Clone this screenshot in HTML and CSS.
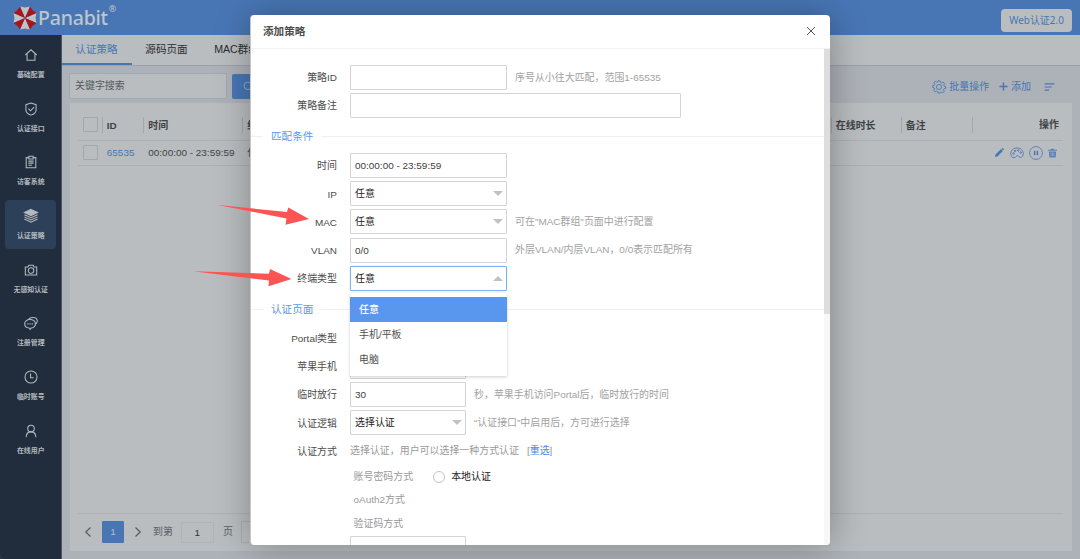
FILE: index.html
```html
<!DOCTYPE html>
<html lang="zh-CN">
<head>
<meta charset="utf-8">
<title>Panabit</title>
<link rel="stylesheet" href="styles.css">
</head>
<body>
<div class="app">
  <header class="topbar">
    <div class="brand">
      <svg class="brand-mark" viewBox="-12 -12 24 24">
        <path fill="#bfc3c6" d="M0 0L-5-11.500 0-10.500 5-11.500ZM0 0L11.500-5 10.500 0 11.500 5ZM0 0L5 11.500 0 10.500-5 11.500ZM0 0L-11.500 5-10.500 0-11.500-5Z"/>
        <path fill="#a8151d" d="M0 0L5-11.500 7.800-7.800 11.500-5ZM0 0L11.500 5 7.800 7.800 5 11.500ZM0 0L-5 11.500-7.800 7.800-11.500 5ZM0 0L-11.500-5-7.800-7.800-5-11.500Z"/>
      </svg>
      <span class="brand-name">Panabit</span><span class="brand-reg">®</span>
    </div>
    <div class="version">Web认证2.0</div>
  </header>
  <div class="main">
    <nav class="side">
      <a class="side-item"><svg viewBox="0 0 16 16"><path d="M1.500 8 8 2l6.500 6M3.500 7v7h9V7"/></svg><span>基础配置</span></a>
      <a class="side-item"><svg viewBox="0 0 16 16"><path d="M8 1.200 13.800 3v6c0 3-3 5-5.800 6-2.800-1-5.800-3-5.800-6V3ZM5 7.500l2.500 2.600 4-4.300"/></svg><span>认证接口</span></a>
      <a class="side-item"><svg viewBox="0 0 16 16"><path d="M5 3H2.500v11.500h11V3H11M5.500 1.500h5v3h-5ZM5 7h6M5 9.300h6M5 11.700h4"/></svg><span>访客系统</span></a>
      <a class="side-item active"><svg viewBox="0 0 16 16"><path class="solid" d="M8 .5 15.500 4 8 7.500.5 4Z"/><path d="M.5 6.500 8 10l7.500-3.500M.5 9 8 12.500 15.500 9M.5 11.500 8 15l7.500-3.500"/></svg><span>认证策略</span></a>
      <a class="side-item"><svg viewBox="0 0 16 16"><path d="M1.500 4.500h3l1-2h5l1 2h3v9.200h-13Z"/><circle cx="8" cy="8.700" r="3.200"/></svg><span>无感知认证</span></a>
      <a class="side-item"><svg viewBox="0 0 16 16"><path d="M5 4.200C7 .8 14.800.8 15.200 5.500c.1 2-1 3.200-2.200 4M6.800 4C3 4 .8 6.300.8 8.800c0 3 2.500 4.700 5 4.900l1.200 1.500 1.200-1.500c2.800-.3 4.800-2.200 4.800-4.900S10.600 4 6.800 4ZM3.800 9h1.400M6.300 9h1.400M8.800 9h1.400"/></svg><span>注册管理</span></a>
      <a class="side-item"><svg viewBox="0 0 16 16"><circle cx="8" cy="8" r="6.900"/><path d="M7.500 4v4.800H11"/></svg><span>临时账号</span></a>
      <a class="side-item"><svg viewBox="0 0 16 16"><circle cx="8" cy="5.200" r="3.800"/><path d="M2.500 15c0-4.500 2.300-6 5.500-6s5.500 1.500 5.500 6"/></svg><span>在线用户</span></a>
    </nav>
    <section class="content">
      <div class="tabs"><a class="tab on">认证策略</a><a class="tab">源码页面</a><a class="tab">MAC群组</a></div>
      <div class="toolbar">
        <div class="search">关键字搜索</div>
        <div class="search-btn"><svg viewBox="0 0 16 16"><circle cx="7" cy="7" r="5.500"/><path d="m11 11 4 4"/></svg></div>
        <div class="actions">
          <svg class="gear" viewBox="0 0 16 16"><circle cx="8" cy="8" r="2.900"/><path d="M6.800 1h2.400l.5 1.900 1.200.5 1.800-1 1.600 1.700-1 1.700.5 1.200 1.700.5v2l-1.900.6-.5 1.200 1 1.700-1.700 1.600-1.700-1-1.200.5L9 15H7l-.6-1.900-1.200-.5-1.700 1L1.900 12l1-1.800-.5-1.200L.8 8.500v-2l1.800-.5.5-1.200-1-1.700 1.700-1.600 1.700 1 1.200-.5Z"/></svg><span class="act-batch">批量操作</span>
          <svg class="plus" viewBox="0 0 10 10"><path d="M5 .5v9M.5 5h9"/></svg><span class="act-add">添加</span>
          <svg class="sort" viewBox="0 0 11 9"><path d="M0 1h11M0 4.500h8M0 8h5"/></svg>
        </div>
      </div>
      <div class="card">
        <div class="row head"><div class="c-check"><i></i></div><div class="c-id">ID</div><div class="c-time">时间</div><div class="c-mid">终端</div><div class="c-online">在线时长</div><div class="c-note">备注</div><div class="c-op">操作</div></div>
        <div class="row"><div class="c-check"><i></i></div><div class="c-id link">65535</div><div class="c-time">00:00:00 - 23:59:59</div><div class="c-mid">任意</div><div class="c-online"></div><div class="c-note"></div>
          <div class="c-op">
            <svg class="op-edit" viewBox="0 0 10 10"><path d="M0 10l.6-2.700L6.700 1.200l2 2L2.700 9.400ZM7.300.7l.7-.6q.4-.3.8.1l1 1q.3.4 0 .7l-.6.700Z"/></svg>
            <svg class="op-skin" viewBox="0 0 16 13"><path d="M8 .8C3.500.8.8 3.800.8 7c0 3 1.800 5 4 5 1.700 0 1.800-2.500 3.700-2.500 1.700 0 1.500 2 3.500 2 1.800 0 3.200-1.800 3.200-4.300C15.200 3.800 12.500.8 8 .8Z"/><circle cx="4" cy="7" r=".9"/><circle cx="5.800" cy="4" r=".9"/><circle cx="9.500" cy="3.600" r=".9"/><circle cx="12.300" cy="6" r=".9"/></svg>
            <svg class="op-pause" viewBox="0 0 14 14"><circle cx="7" cy="7" r="6.400"/><path d="M5.600 4.700v4.600M8.400 4.700v4.600"/></svg>
            <svg class="op-del" viewBox="0 0 10 10"><path class="f" d="M0 1.300h3L3.500.3h3L7 1.300h3v1.200H0ZM1 3.300h8L8.500 10h-7Z"/><path class="gap" d="M3.500 4.500v4M5 4.500v4M6.500 4.500v4"/></svg>
          </div>
        </div>
        <div class="pager">
          <svg viewBox="0 0 6 10"><path d="M5.500.5.800 5l4.700 4.500"/></svg>
          <b class="page-now">1</b>
          <svg viewBox="0 0 6 10"><path d="M.5.500 5.200 5 .5 9.500"/></svg>
          <span class="goto">到第</span><span class="page-input">1</span><span>页</span><span class="page-ok">确定</span>
        </div>
      </div>
    </section>
  </div>
</div>

<div class="dialog">
  <div class="dialog-head"><h1>添加策略</h1><svg viewBox="0 0 10 10"><path d="m1 1 8 8M9 1 1 9"/></svg></div>
  <div class="dialog-body">
    <div class="form">
      <div class="field"><label>策略ID</label><div class="input"></div><span class="hint">序号从小往大匹配，范围1-65535</span></div>
      <div class="field"><label>策略备注</label><div class="input wide"></div></div>
      <div class="section"><span>匹配条件</span></div>
      <div class="field"><label>时间</label><div class="input">00:00:00 - 23:59:59</div></div>
      <div class="field"><label>IP</label><div class="input select">任意</div></div>
      <div class="field"><label>MAC</label><div class="input select">任意</div><span class="hint">可在"MAC群组"页面中进行配置</span></div>
      <div class="field"><label>VLAN</label><div class="input">0/0</div><span class="hint">外层VLAN/内层VLAN，0/0表示匹配所有</span></div>
      <div class="field"><label>终端类型</label><div class="input select open">任意
        <div class="menu"><div class="option picked">任意</div><div class="option">手机/平板</div><div class="option">电脑</div></div></div></div>
      <div class="section second"><span>认证页面</span></div>
      <div class="field"><label>Portal类型</label><div class="input short"></div></div>
      <div class="field"><label>苹果手机</label><div class="input short"></div></div>
      <div class="field"><label>临时放行</label><div class="input short">30</div><span class="hint">秒，苹果手机访问Portal后，临时放行的时间</span></div>
      <div class="field"><label>认证逻辑</label><div class="input short select">选择认证</div><span class="hint">“认证接口”中启用后，方可进行选择</span></div>
      <div class="field"><label>认证方式</label><span class="note">选择认证，用户可以选择一种方式认证</span><span class="reset">[<a>重选</a>]</span></div>
      <div class="methods">
        <div class="method"><span>账号密码方式</span><i class="radio"></i><em>本地认证</em></div>
        <div class="method">oAuth2方式</div>
        <div class="method">验证码方式</div>
      </div>
      <div class="field"><label></label><div class="input short"></div></div>
    </div>
    <div class="scroll"><div class="thumb"></div></div>
  </div>
</div>

<svg class="arrows" viewBox="0 0 1080 559"><path d="M218 205 287 212 288.300 207.500 309 219 285.500 224.700 286.500 218.500ZM193 271.200 269 273.700 270 269 291.500 279 268.500 286.300 269 280.500Z"/></svg>
</body>
</html>
```

FILE: styles.css
```css
* { box-sizing: border-box; }
body { margin: 0; width: 1080px; height: 559px; overflow: hidden; position: relative; font: 9.95px/14px "Liberation Sans", "Noto Sans CJK SC", sans-serif; color: #404346; }
svg { display: block; flex: none; overflow: visible; fill: none; stroke: currentColor; }
.app { height: 559px; display: flex; flex-direction: column; background: #2c3644; }
.topbar { height: 35px; flex: none; background: #4876b5; display: flex; justify-content: space-between; padding: 0 8px 0 13px; }
.brand { display: flex; align-items: flex-start; color: #bfc5cb; }
.brand-mark { width: 24px; height: 24px; margin-top: 5.500px; stroke: none; }
.brand-name { font: 500 19.500px/26px "Noto Sans", sans-serif; margin: 5px 0 0 1px; letter-spacing: -.2px; }
.brand-reg { font: 9px/10px "Noto Sans", sans-serif; margin: 4px 0 0 1px; }
.version { margin-top: 8.500px; width: 71px; height: 23px; border-radius: 4px; background: #b9bdc0; color: #4876b5; font-family: "Noto Sans", "Noto Sans CJK SC", sans-serif; line-height: 22px; text-align: center; }
.main { flex: 1; display: flex; min-height: 0; }
.side { width: 61.500px; background: #212d3d; border-right: 1px solid #4a5468; padding: 4px 0 0 1px; display: flex; flex-direction: column; align-items: center; gap: 4.700px; border-bottom-left-radius: 6px; }
.side-item { width: 51px; height: 49px; border-radius: 4px; display: flex; flex-direction: column; align-items: center; padding-top: 9px; gap: 7px; color: #b4b9be; font-size: 6.900px; line-height: 12px; font-weight: 700; white-space: nowrap; }
.side-item svg { width: 14px; height: 14px; stroke-width: 1.200; }
.side-item.active { background: #2d4059; }
.solid { fill: currentColor; }
.content { flex: 1; min-width: 0; background: #adb1b8; display: flex; flex-direction: column; }
.tabs { height: 30.500px; flex: none; background: #b9bdc0; border-bottom: 1px solid #9aa2af; display: flex; }
.tab { height: 30px; line-height: 28px; width: 70px; text-align: center; font-size: 10.600px; white-space: nowrap; color: #292c30; flex: none; }
.tab.on { color: #4876b5; border-bottom: 2px solid #4876b5; }
.toolbar { height: 37.500px; flex: none; display: flex; align-items: center; padding: 4px 25px 0 7.500px; }
.search { width: 158px; height: 26px; border: 1px solid #a0a9b6; background: #b9bdc0; border-radius: 2px; padding: 0 5px; line-height: 24px; color: #55595d; }
.search-btn { width: 36px; height: 25px; margin-left: 4.500px; background: #4876b5; color: #b9bdc0; border-radius: 2px; padding: 7px 11px; }
.search-btn svg { width: 11px; height: 11px; }
.actions { margin-left: auto; display: flex; align-items: center; color: #4876b5; padding-top: 1px; }
.gear { width: 14px; height: 14px; margin-right: 3px; }
.act-batch { margin-right: 10px; }
.plus { width: 9px; height: 9px; margin-right: 3px; stroke-width: 1.600; }
.act-add { margin-right: 13px; }
.sort { width: 11px; height: 8px; stroke-width: 1.300; }
.card { flex: 1; margin: 0 8px 8px; background: #b9bdc0; padding: 7px 9px 0 8.300px; display: flex; flex-direction: column; }
.row { height: 25.500px; display: flex; align-items: center; border-bottom: 1px solid #adb1b4; }
.row.head { height: 30.500px; font-weight: 700; }
.row > div { height: 16px; line-height: 16px; white-space: nowrap; padding-left: 4px; border-left: 1px solid transparent; }
.row.head > div { line-height: 17px; }
.row.head > div + div { border-color: #a3a8ab; }
.row > .c-check { width: 24px; }
.c-check i { display: block; width: 15px; height: 15px; border: 1px solid #a3a7aa; border-radius: 1px; }
.c-id { width: 41.500px; }
.link { color: #4876b5; }
.c-time { width: 99px; }
.c-mid { width: 588.500px; }
.c-online { width: 70px; }
.c-note { width: 71px; }
.row > .c-op { flex: 1; display: flex; justify-content: flex-end; align-items: center; padding-right: 4px; }
.row:not(.head) .c-op { color: #4876b5; padding-right: 6px; }
.op-edit { width: 9px; height: 9px; fill: currentColor; stroke: none; margin-right: 6px; }
.op-skin { width: 14px; height: 12px; margin-right: 5px; }
.op-pause { width: 14px; height: 14px; margin-right: 5px; stroke-width: .8; }
.op-pause path { stroke-width: 1.500; }
.op-del { width: 9px; height: 10px; opacity: .85; }
.op-del .f { fill: currentColor; stroke: none; }
.op-del .gap { stroke: #b9bdc0; stroke-width: .6; }
.pager { margin-top: auto; height: 38px; border-top: 1px solid #adb1b4; display: flex; align-items: center; padding: 0 0 1px 7.200px; color: #5c6064; }
.pager svg { width: 6px; height: 10px; stroke-width: 1.300; }
.page-now { width: 22px; height: 22px; margin: 0 11px; background: #4876b5; color: #b9bdc0; border-radius: 1px; text-align: center; line-height: 22px; font-weight: 400; }
.goto { margin-left: 12px; }
.page-input { width: 33px; height: 21px; margin: 0 9px 0 8px; border: 1px solid #b0b4b7; text-align: center; line-height: 20px; color: #303336; }
.page-ok { border: 1px solid #a8acaf; margin-left: 8px; padding: 3px 8px; }

.dialog { position: absolute; left: 250px; top: 14.500px; width: 580px; height: 530px; background: #fff; border-radius: 4px; box-shadow: 1px 1px 36px rgba(0,0,0,.3); overflow: hidden; display: flex; flex-direction: column; border-left: 1px solid #c4c7ca; }
.dialog-head { height: 34px; flex: none; display: flex; justify-content: space-between; align-items: center; padding: 0 14px 0 12px; border-bottom: 1px solid #f3f3f3; }
h1 { margin: 0; font-size: 10.600px; line-height: 16px; color: #4c4c4c; }
.dialog-head svg { width: 10px; height: 10px; color: #555; }
.dialog-body { flex: 1; min-height: 0; display: flex; }
.form { flex: 1; padding-top: 16.500px; }
.scroll { width: 6.500px; background: #f7f7f7; }
.thumb { height: 265.500px; background: #ddd; }
.field { height: 25px; margin-bottom: 3.200px; display: flex; align-items: center; color: #4c4c4c; white-space: nowrap; }
.field label { width: 86px; margin-right: 13px; padding-top: 1.500px; text-align: right; }
.input { position: relative; width: 157px; height: 25px; border: 1px solid #d4d4d4; border-radius: 1px; padding-left: 4px; line-height: 24px; color: #404040; }
.wide { width: 331px; }
.short { width: 116px; }
.select { color: #222; }
.select::after { content: ""; position: absolute; right: 3px; top: 9px; border: 5px solid transparent; border-top-color: #c2c2c2; border-bottom-width: 0; }
.select.open { border-color: #7eaff0; box-shadow: 0 0 2px #d5e5fb; }
.select.open::after { border-width: 0 5px 5px; border-bottom-color: #c2c2c2; }
.hint { margin-left: 8px; color: #a2a2a2; }
.section { height: 17px; margin: 9.500px 0 8.400px; display: flex; align-items: center; gap: 8px; color: #5a98ee; font-size: 10.600px; }
.section::before, .section::after { content: ""; height: 1px; background: #f0f0f0; }
.section::before { width: 12px; }
.section::after { flex: 1; }
.section.second { margin-top: 10px; margin-bottom: 8px; }
.menu { position: absolute; z-index: 2; left: -1px; top: 26.500px; width: 157px; height: 83px; padding: 4px 0; background: #fff; box-shadow: 0 1px 3px rgba(0,0,0,.2); }
.option { height: 25px; line-height: 25px; padding-left: 9px; color: #505050; }
.picked { background: #5997ee; color: #fff; font-weight: 500; }
.note { color: #999; }
.reset { margin-left: 8px; color: #999; }
.reset a { color: #4589ed; }
.methods { margin: -2px 0 .5px; }
.method { height: 23.700px; display: flex; align-items: center; padding-left: 102.500px; color: #999; }
.radio { width: 12px; height: 12px; border: 1px solid #c4c4c4; border-radius: 50%; margin: 0 6px 0 20px; }
em { font-style: normal; color: #222; }
.arrows { position: absolute; left: 0; top: 0; width: 1080px; height: 559px; fill: #fc5353; stroke: none; pointer-events: none; }
```
